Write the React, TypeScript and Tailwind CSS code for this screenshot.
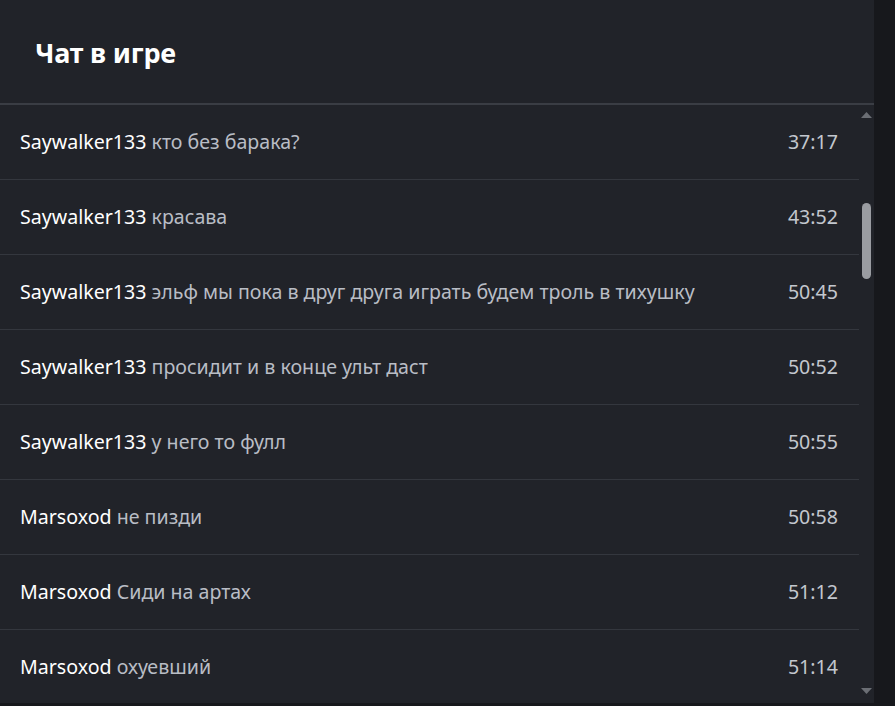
import React from 'react';

type Msg = { user: string; text: string; time: string };

const messages: Msg[] = [
  { user: 'Saywalker133', text: 'кто без барака?', time: '37:17' },
  { user: 'Saywalker133', text: 'красава', time: '43:52' },
  { user: 'Saywalker133', text: 'эльф мы пока в друг друга играть будем троль в тихушку', time: '50:45' },
  { user: 'Saywalker133', text: 'просидит и в конце ульт даст', time: '50:52' },
  { user: 'Saywalker133', text: 'у него то фулл', time: '50:55' },
  { user: 'Marsoxod', text: 'не пизди', time: '50:58' },
  { user: 'Marsoxod', text: 'Сиди на артах', time: '51:12' },
  { user: 'Marsoxod', text: 'охуевший', time: '51:14' },
];

const FakeScrollbar: React.FC = () => (
  <div className="w-[15px] shrink-0 flex flex-col items-center pt-[7px] pb-[9px]">
    <svg width="11" height="6" viewBox="0 0 11 6">
      <path d="M5.5 0 L11 6 L0 6 Z" fill="#6b6e74" />
    </svg>
    <div className="mt-[85px] w-[9px] h-[76px] rounded-full bg-[#9a9ca1]" />
    <div className="flex-1" />
    <svg width="11" height="6" viewBox="0 0 11 6">
      <path d="M0 0 L11 0 L5.5 6 Z" fill="#6b6e74" />
    </svg>
  </div>
);

export default function App() {
  return (
    <div
      className="w-[895px] h-[706px] bg-[#17181c] flex overflow-hidden"
      style={{ fontFamily: '"Noto Sans", "Open Sans", sans-serif' }}
    >
      <div className="w-[874px] h-[703px] bg-[#212329] flex flex-col">
        <div className="h-[105px] shrink-0 flex items-center pl-[35px] pt-[3px] border-b-2 border-[#3a3d44]">
          <h2 className="text-[27px] font-bold text-white tracking-[-0.2px]">Чат в игре</h2>
        </div>
        <div className="flex-1 flex min-h-0">
          <div className="flex-1 overflow-hidden">
            {messages.map((m, i) => (
              <div
                key={i}
                className="h-[75px] flex items-center justify-between pl-[20px] pr-[21px] border-b border-[#34373e]"
              >
                <p className="text-[19.6px] leading-none whitespace-nowrap">
                  <span className="text-white">{m.user}</span>{' '}
                  <span className="text-[#b9bdc5]">{m.text}</span>
                </p>
                <span className="text-[19.6px] leading-none text-[#c3c7ce]">{m.time}</span>
              </div>
            ))}
          </div>
          <FakeScrollbar />
        </div>
      </div>
    </div>
  );
}
